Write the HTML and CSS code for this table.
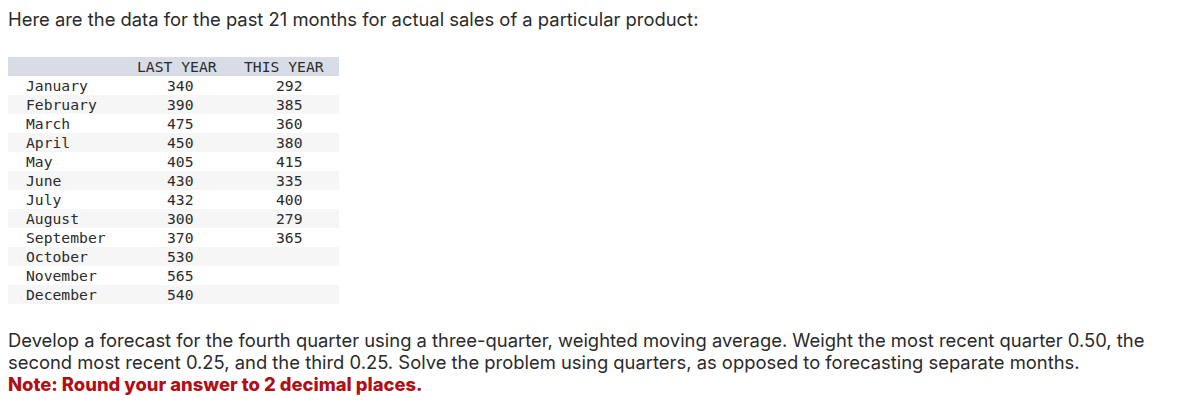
FILE: index.html
```html
<!DOCTYPE html>
<html lang="en">
<head>
<meta charset="utf-8">
<title>Sales data</title>
<link rel="stylesheet" href="styles.css">
</head>
<body>
<p class="intro">Here are the data for the past 21 months for actual sales of a particular product:</p>
<table class="data">
  <colgroup>
    <col class="w-month">
    <col class="w-last">
    <col class="w-this">
  </colgroup>
  <thead>
    <tr><th class="c-month"></th><th class="c-last">LAST YEAR</th><th class="c-this">THIS YEAR</th></tr>
  </thead>
  <tbody>
    <tr><td class="c-month">January</td><td class="c-last">340</td><td class="c-this">292</td></tr>
    <tr><td class="c-month">February</td><td class="c-last">390</td><td class="c-this">385</td></tr>
    <tr><td class="c-month">March</td><td class="c-last">475</td><td class="c-this">360</td></tr>
    <tr><td class="c-month">April</td><td class="c-last">450</td><td class="c-this">380</td></tr>
    <tr><td class="c-month">May</td><td class="c-last">405</td><td class="c-this">415</td></tr>
    <tr><td class="c-month">June</td><td class="c-last">430</td><td class="c-this">335</td></tr>
    <tr><td class="c-month">July</td><td class="c-last">432</td><td class="c-this">400</td></tr>
    <tr><td class="c-month">August</td><td class="c-last">300</td><td class="c-this">279</td></tr>
    <tr><td class="c-month">September</td><td class="c-last">370</td><td class="c-this">365</td></tr>
    <tr><td class="c-month">October</td><td class="c-last">530</td><td class="c-this"></td></tr>
    <tr><td class="c-month">November</td><td class="c-last">565</td><td class="c-this"></td></tr>
    <tr><td class="c-month">December</td><td class="c-last">540</td><td class="c-this"></td></tr>
  </tbody>
</table>
<p class="task">Develop a forecast for the fourth quarter using a three-quarter, weighted moving average. Weight the most recent quarter 0.50, the second most recent 0.25, and the third 0.25. Solve the problem using quarters, as opposed to forecasting separate months.<br><strong class="note">Note: Round your answer to 2 decimal places.</strong></p>
</body>
</html>
```
FILE: styles.css
```css
body {
  margin: 8px;
  font-family: "Inter", "Lato", "Liberation Sans", sans-serif;
  font-size: 18.4px;
  line-height: 22px;
  color: #2b2b2b;
  background: #ffffff;
}

.intro {
  margin: 0;
}

.data {
  margin-top: 27px;
  border-collapse: collapse;
  width: 331px;
  table-layout: fixed;
  font-family: "DejaVu Sans Mono", "Liberation Mono", monospace;
  font-size: 14.7px;
  line-height: 19px;
  color: #2b2b2b;
}

.w-month {
  width: 110px;
}

.w-last {
  width: 118px;
}

.w-this {
  width: 103px;
}

.data th,
.data td {
  box-sizing: border-box;
  height: 19px;
  padding: 0;
  text-align: left;
  font-weight: normal;
  white-space: nowrap;
  vertical-align: middle;
  overflow: hidden;
}

.data thead tr {
  background: #d8dce6;
}

.data tbody tr:nth-child(even) {
  background: #f6f6f6;
}

.data td.c-month {
  padding-left: 18px;
}

.data th.c-last {
  padding-left: 19px;
}

.data th.c-this {
  padding-left: 8px;
}

.data td.c-last {
  padding-left: 49px;
}

.data td.c-this {
  padding-left: 40px;
}

.task {
  margin: 25px 0 0;
}

.note {
  color: #b10f16;
  font-weight: 800;
}
```
